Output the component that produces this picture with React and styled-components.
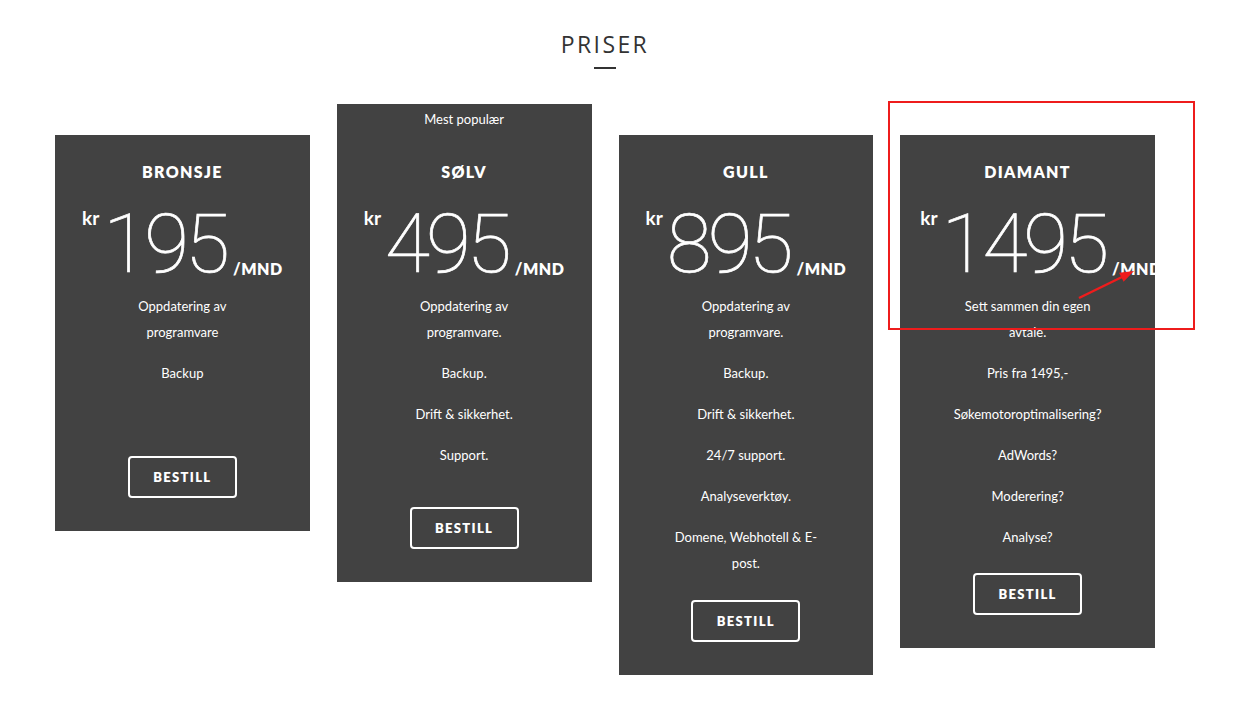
import React from "react";
import styled, { createGlobalStyle } from "styled-components";

const plans = [
  {
    name: "BRONSJE",
    price: "195",
    features: ["Oppdatering av programvare", "Backup"],
    extra: 46,
  },
  {
    name: "SØLV",
    price: "495",
    popular: true,
    features: [
      "Oppdatering av programvare.",
      "Backup.",
      "Drift & sikkerhet.",
      "Support.",
    ],
    extra: 15,
  },
  {
    name: "GULL",
    price: "895",
    features: [
      "Oppdatering av programvare.",
      "Backup.",
      "Drift & sikkerhet.",
      "24/7 support.",
      "Analyseverktøy.",
      "Domene, Webhotell & E-post.",
    ],
    extra: 0,
  },
  {
    name: "DIAMANT",
    price: "1495",
    features: [
      "Sett sammen din egen avtale.",
      "Pris fra 1495,-",
      "Søkemotoroptimalisering?",
      "AdWords?",
      "Moderering?",
      "Analyse?",
    ],
    extra: -1,
  },
];

export default function App() {
  return (
    <>
      <GlobalStyle />
      <Page>
        <Heading>PRISER</Heading>
        <Rule />
        <Cards>
          {plans.map((plan) => (
            <Card key={plan.name} $popular={plan.popular}>
              {plan.popular && <Banner>Mest populær</Banner>}
              <Title>{plan.name}</Title>
              <PriceRow>
                <Currency>kr</Currency>
                <Amount>{plan.price}</Amount>
                <Per>/MND</Per>
              </PriceRow>
              <Features $extra={plan.extra}>
                {plan.features.map((f) => (
                  <li key={f}>{f}</li>
                ))}
              </Features>
              <Button>BESTILL</Button>
            </Card>
          ))}
        </Cards>
        <Annotation width="1243" height="716" viewBox="0 0 1243 716">
          <rect x="889" y="102" width="305" height="227" fill="none" stroke="#ee1c1c" strokeWidth="2" />
          <line x1="1079" y1="298" x2="1122" y2="277" stroke="#ee1c1c" strokeWidth="2.5" />
          <polygon points="1134,271 1119,272.7 1123.6,281.7" fill="#ee1c1c" />
        </Annotation>
      </Page>
    </>
  );
}

const GlobalStyle = createGlobalStyle`
  body {
    margin: 0;
    background: #fff;
    font-family: "Lato", "Open Sans", sans-serif;
  }
`;

const Page = styled.div`
  position: relative;
  width: 1100px;
  margin-left: 55px;
  padding-top: 31px;
  padding-bottom: 40px;
  display: flex;
  flex-direction: column;
  align-items: center;
`;

const Heading = styled.h2`
  margin: 0;
  font-family: "Open Sans", sans-serif;
  font-weight: 400;
  font-size: 23px;
  line-height: 26px;
  letter-spacing: 2.4px;
  color: #333;
`;

const Rule = styled.div`
  width: 22px;
  height: 2px;
  background: #333;
  margin-top: 10px;
`;

const Cards = styled.div`
  width: 100%;
  margin-top: 35px;
  display: grid;
  grid-template-columns: repeat(4, 1fr);
  gap: 27px;
  align-items: start;
`;

const Card = styled.div`
  background: #424242;
  color: #fff;
  margin-top: ${(p) => (p.$popular ? "0" : "31px")};
  padding: 0 20px 33px;
  overflow: hidden;
  display: flex;
  flex-direction: column;
  align-items: center;
`;

const Banner = styled.div`
  font-size: 13px;
  line-height: 20px;
  padding: 5px 0 6px;
`;

const Title = styled.h3`
  margin: 27px 0 0;
  font-family: "Lato", sans-serif;
  font-weight: 800;
  font-size: 16px;
  line-height: 20px;
  letter-spacing: 1.3px;
`;

const PriceRow = styled.div`
  align-self: stretch;
  box-sizing: border-box;
  height: 111px;
  padding-top: 17px;
  text-align: center;
  white-space: nowrap;
  font-size: 82px;
  line-height: 82px;
`;

const Currency = styled.span`
  font-family: "Lato", sans-serif;
  font-weight: 700;
  font-size: 19px;
  line-height: 20px;
  vertical-align: 47px;
`;

const Amount = styled.span`
  font-family: "Roboto", sans-serif;
  font-weight: 100;
  font-size: 82px;
  letter-spacing: -4px;
  margin-left: 4px;
  -webkit-text-stroke: 0.7px #fff;
`;

const Per = styled.span`
  font-family: "Lato", sans-serif;
  font-weight: 800;
  font-size: 16px;
  line-height: 20px;
  letter-spacing: 0.5px;
  margin-left: 7px;
  vertical-align: -3px;
`;

const Features = styled.ul`
  list-style: none;
  margin: 0 0 ${(p) => 9 + p.$extra}px;
  padding: 0;
  width: 152px;
  text-align: center;
  font-size: 13px;
  line-height: 26px;
  li {
    margin-bottom: 15px;
  }
`;

const Button = styled.button`
  width: 109px;
  height: 42px;
  background: transparent;
  border: 2px solid #fff;
  border-radius: 4px;
  color: #fff;
  font-family: "Lato", sans-serif;
  font-weight: 800;
  font-size: 13px;
  letter-spacing: 1.3px;
  cursor: pointer;
`;

const Annotation = styled.svg`
  position: fixed;
  left: 0;
  top: 0;
  pointer-events: none;
`;
